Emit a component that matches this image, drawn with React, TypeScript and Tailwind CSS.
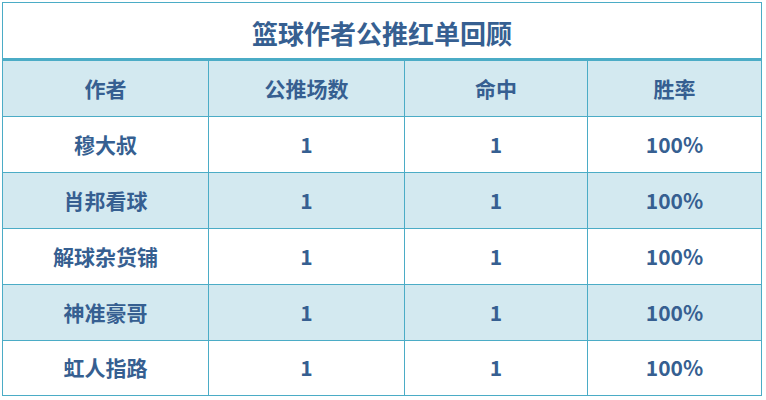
import React from "react";

const rows = [
  { name: "穆大叔", picks: 1, hits: 1, rate: "100%" },
  { name: "肖邦看球", picks: 1, hits: 1, rate: "100%" },
  { name: "解球杂货铺", picks: 1, hits: 1, rate: "100%" },
  { name: "神准豪哥", picks: 1, hits: 1, rate: "100%" },
  { name: "虹人指路", picks: 1, hits: 1, rate: "100%" },
];

const cols = "grid grid-cols-[205px_196px_183px_174px]";
const cell = "flex items-center justify-center";

export default function App() {
  return (
    <div
      className="bg-white w-[766px] h-[400px] pt-[2px] pl-[2px] text-[#365f91] font-bold"
      style={{ fontFamily: '"Noto Sans CJK SC", "Noto Sans", sans-serif' }}
    >
      <div className="w-[760px] border border-[#4bacc6]">
        <div className="h-[55px] flex items-center justify-center text-[26px] pt-[3px]">
          篮球作者公推红单回顾
        </div>
        <div className={`${cols} h-[58px] border-t-[3px] border-[#4bacc6] bg-[#d3e9f0] text-[21px]`}>
          <div className={cell}>作者</div>
          <div className={`${cell} border-l border-[#4bacc6]`}>公推场数</div>
          <div className={`${cell} border-l border-[#4bacc6]`}>命中</div>
          <div className={`${cell} border-l border-[#4bacc6]`}>胜率</div>
        </div>
        {rows.map((r, i) => (
          <div
            key={r.name}
            className={`${cols} ${i === 4 ? "h-[55px]" : "h-[56px]"} border-t border-[#4bacc6] text-[21px] ${
              i % 2 === 1 ? "bg-[#d3e9f0]" : "bg-white"
            }`}
          >
            <div className={cell}>{r.name}</div>
            <div className={`${cell} border-l border-[#4bacc6]`}>{r.picks}</div>
            <div className={`${cell} border-l border-[#4bacc6]`}>{r.hits}</div>
            <div className={`${cell} border-l border-[#4bacc6]`}>{r.rate}</div>
          </div>
        ))}
      </div>
    </div>
  );
}
